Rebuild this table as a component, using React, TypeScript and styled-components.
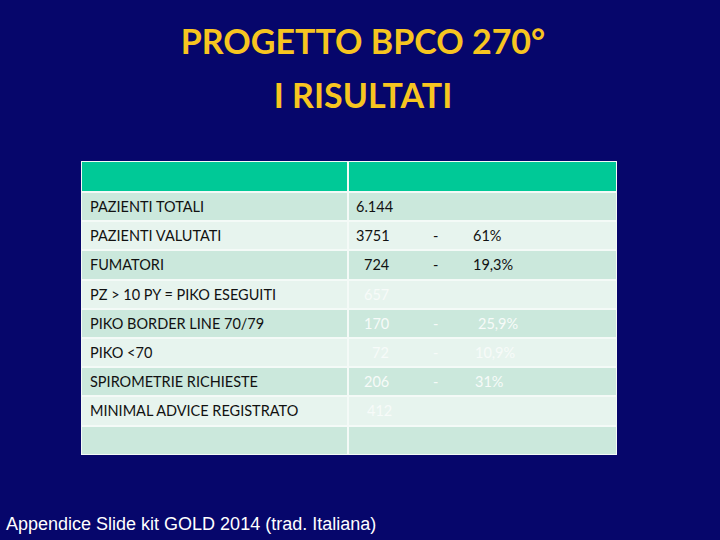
import React from "react";
import styled, { createGlobalStyle } from "styled-components";

const Global = createGlobalStyle`
  html, body { margin: 0; padding: 0; background: #06066b; }
  #root { width: 720px; height: 540px; }
`;

const Slide = styled.div`
  width: 720px;
  height: 540px;
  background: #06066b;
  display: flex;
  flex-direction: column;
  align-items: flex-start;
  overflow: hidden;
`;

const Title = styled.h1`
  margin: 14px 0 0 3px;
  width: 720px;
  text-align: center;
  font-family: Lato, "Open Sans", sans-serif;
  font-weight: 700;
  font-size: 34px;
  line-height: 54px;
  color: #f7c520;
`;

const Table = styled.div`
  margin: 39px 0 0 81px;
  width: 534px;
  display: grid;
  grid-template-columns: 265px 267px;
  grid-template-rows: 29px;
  grid-auto-rows: 27.2px;
  gap: 2px;
  padding: 1px;
  background: #f4faf7;
`;

const Cell = styled.div<{ $tone: "head" | "dark" | "light" }>`
  background: ${(p) =>
    p.$tone === "head" ? "#00c997" : p.$tone === "dark" ? "#cbe8dc" : "#e7f4ee"};
  display: flex;
  align-items: center;
  font-family: Lato, "Open Sans", sans-serif;
  font-size: 14.5px;
  color: #111;
`;

const Label = styled(Cell)`
  padding-left: 8px;
`;

const Values = styled(Cell)`
  padding-left: 7px;
`;

const Num = styled.span<{ $indent: number; $white: boolean }>`
  width: ${(p) => 77 - p.$indent}px;
  padding-left: ${(p) => p.$indent}px;
  color: ${(p) => (p.$white ? "#f7fbf9" : "#111")};
`;

const Dash = styled.span<{ $white: boolean }>`
  width: 40px;
  color: ${(p) => (p.$white ? "#f7fbf9" : "#111")};
`;

const Pct = styled.span<{ $shift: number; $white: boolean }>`
  padding-left: ${(p) => p.$shift}px;
  color: ${(p) => (p.$white ? "#f7fbf9" : "#111")};
`;

const Footer = styled.div`
  margin: auto 0 5px 6px;
  font-family: "Liberation Sans", Arial, sans-serif;
  font-size: 18px;
  color: #ffffff;
`;

type Row = {
  label: string;
  value: string;
  indent: number;
  pct?: string;
  shift?: number;
  white?: boolean;
};

const rows: Row[] = [
  { label: "PAZIENTI TOTALI", value: "6.144", indent: 0 },
  { label: "PAZIENTI VALUTATI", value: "3751", indent: 0, pct: "61%" },
  { label: "FUMATORI", value: "724", indent: 8, pct: "19,3%" },
  { label: "PZ > 10 PY = PIKO ESEGUITI", value: "657", indent: 8, white: true },
  { label: "PIKO BORDER LINE 70/79", value: "170", indent: 8, pct: "25,9%", shift: 5, white: true },
  { label: "PIKO <70", value: "72", indent: 16, pct: "10,9%", shift: 2, white: true },
  { label: "SPIROMETRIE RICHIESTE", value: "206", indent: 8, pct: "31%", shift: 2, white: true },
  { label: "MINIMAL ADVICE REGISTRATO", value: "412", indent: 11, white: true },
];

export default function App() {
  return (
    <Slide>
      <Global />
      <Title>
        PROGETTO BPCO 270°
        <br />I RISULTATI
      </Title>
      <Table>
        <Cell $tone="head" />
        <Cell $tone="head" />
        {rows.map((r, i) => {
          const tone = i % 2 === 0 ? "dark" : "light";
          const white = !!r.white;
          return (
            <React.Fragment key={r.label}>
              <Label $tone={tone}>{r.label}</Label>
              <Values $tone={tone}>
                <Num $indent={r.indent} $white={white}>
                  {r.value}
                </Num>
                {r.pct && (
                  <>
                    <Dash $white={white}>-</Dash>
                    <Pct $shift={r.shift ?? 0} $white={white}>
                      {r.pct}
                    </Pct>
                  </>
                )}
              </Values>
            </React.Fragment>
          );
        })}
        <Cell $tone="dark" />
        <Cell $tone="dark" />
      </Table>
      <Footer>Appendice Slide kit GOLD 2014 (trad. Italiana)</Footer>
    </Slide>
  );
}
